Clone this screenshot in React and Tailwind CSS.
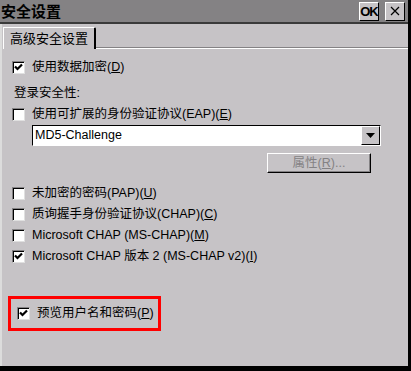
import React from "react";

const font = { fontFamily: '"Liberation Sans", "Noto Sans CJK SC", sans-serif' };

function Check({ checked }) {
  return (
    <span className="inline-flex items-center justify-center w-[13px] h-[13px] bg-white border-t-[#848284] border-l-[#848284] border-b-[#e0e0e0] border-r-[#e0e0e0] border shrink-0 shadow-[inset_1px_1px_0_#000]">
      {checked && (
        <svg width="9" height="9" viewBox="0 0 9 9">
          <path d="M1 3.5 L3.5 6 L8 1.5" fill="none" stroke="#000" strokeWidth="2.2" />
        </svg>
      )}
    </span>
  );
}

function Row({ checked, children, className = "" }) {
  return (
    <div className={"flex items-center gap-[7px] h-[20px] " + className}>
      <Check checked={checked} />
      <span className="text-[12.5px] leading-none text-black">{children}</span>
    </div>
  );
}

export default function App() {
  return (
    <div style={font} className="w-[411px] h-[371px] bg-black relative overflow-hidden">
      <div className="w-[408px] h-[366px] bg-[#c6c3c6] flex flex-col border-l-2 border-[#dcdcdc]">
        {/* title */}
        <div className="h-[24px] bg-[#848284] flex items-center justify-between pl-[1px] pr-[3px] border-b-2 border-[#3a3a3a] -ml-[2px]">
          <span className="text-[15px] font-bold text-black leading-none">安全设置</span>
          <div className="flex gap-[6px] items-center">
            <div className="w-[20px] h-[19px] bg-[#c6c3c6] border border-t-white border-l-white border-b-black border-r-black flex items-center justify-center text-[13px] font-bold leading-none tracking-[-1px]">OK</div>
            <div className="w-[20px] h-[19px] bg-[#c6c3c6] border border-t-white border-l-white border-b-black border-r-black flex items-center justify-center">
              <svg width="10" height="10" viewBox="0 0 10 10"><path d="M1 1 L9 9 M9 1 L1 9" stroke="#000" strokeWidth="1.2" /></svg>
            </div>
          </div>
        </div>
        {/* tab */}
        <div className="flex items-end h-[25px] pl-[1px]">
          <div className="h-[22px] px-[6px] flex items-center text-[13px] border-l border-t border-white border-r-2 border-r-[#000] rounded-tr-[2px] bg-[#c6c3c6]">高级安全设置</div>
          <div className="flex-1 border-b border-white h-0 shadow-[0_-1px_0_#848284]"></div>
        </div>
        <div className="flex-1 flex flex-col px-[10px] pt-[8px]">
          <Row checked>使用数据加密(<u>D</u>)</Row>
          <div className="text-[12.5px] mt-[7px] ml-[2px] h-[18px]">登录安全性:</div>
          <Row className="mt-[2px]">使用可扩展的身份验证协议(EAP)(<u>E</u>)</Row>
          <div className="ml-[20px] mt-[1px] w-[349px] h-[21px] bg-white border border-t-black border-l-black border-b-white border-r-white flex items-center justify-between">
            <span className="text-[12.5px] pl-[2px]">MD5-Challenge</span>
            <div className="w-[19px] h-[19px] bg-[#c6c3c6] border border-t-white border-l-white border-b-black border-r-black flex items-center justify-center">
              <svg width="9" height="5" viewBox="0 0 9 5"><path d="M0 0 H9 L4.5 5 Z" fill="#000" /></svg>
            </div>
          </div>
          <div className="flex justify-end mt-[7px] pr-[27px]">
            <div className="w-[104px] h-[20px] border border-t-white border-l-white border-b-black border-r-black shadow-[inset_-1px_-1px_0_#848284] flex items-center justify-center text-[12.5px] text-[#848284]">属性(<u>R</u>)...</div>
          </div>
          <div className="mt-[10px] flex flex-col gap-[1px]">
            <Row>未加密的密码(PAP)(<u>U</u>)</Row>
            <Row>质询握手身份验证协议(CHAP)(<u>C</u>)</Row>
            <Row>Microsoft CHAP (MS-CHAP)(<u>M</u>)</Row>
            <Row checked>Microsoft CHAP 版本 2 (MS-CHAP v2)(<u>I</u>)</Row>
          </div>
          <div className="mt-[30px] -ml-[4px] w-[153px] h-[35px] border-[3px] border-[#ff0000] flex items-center pl-[6px]">
            <Row checked>预览用户名和密码(<u>P</u>)</Row>
          </div>
        </div>
      </div>
    </div>
  );
}
